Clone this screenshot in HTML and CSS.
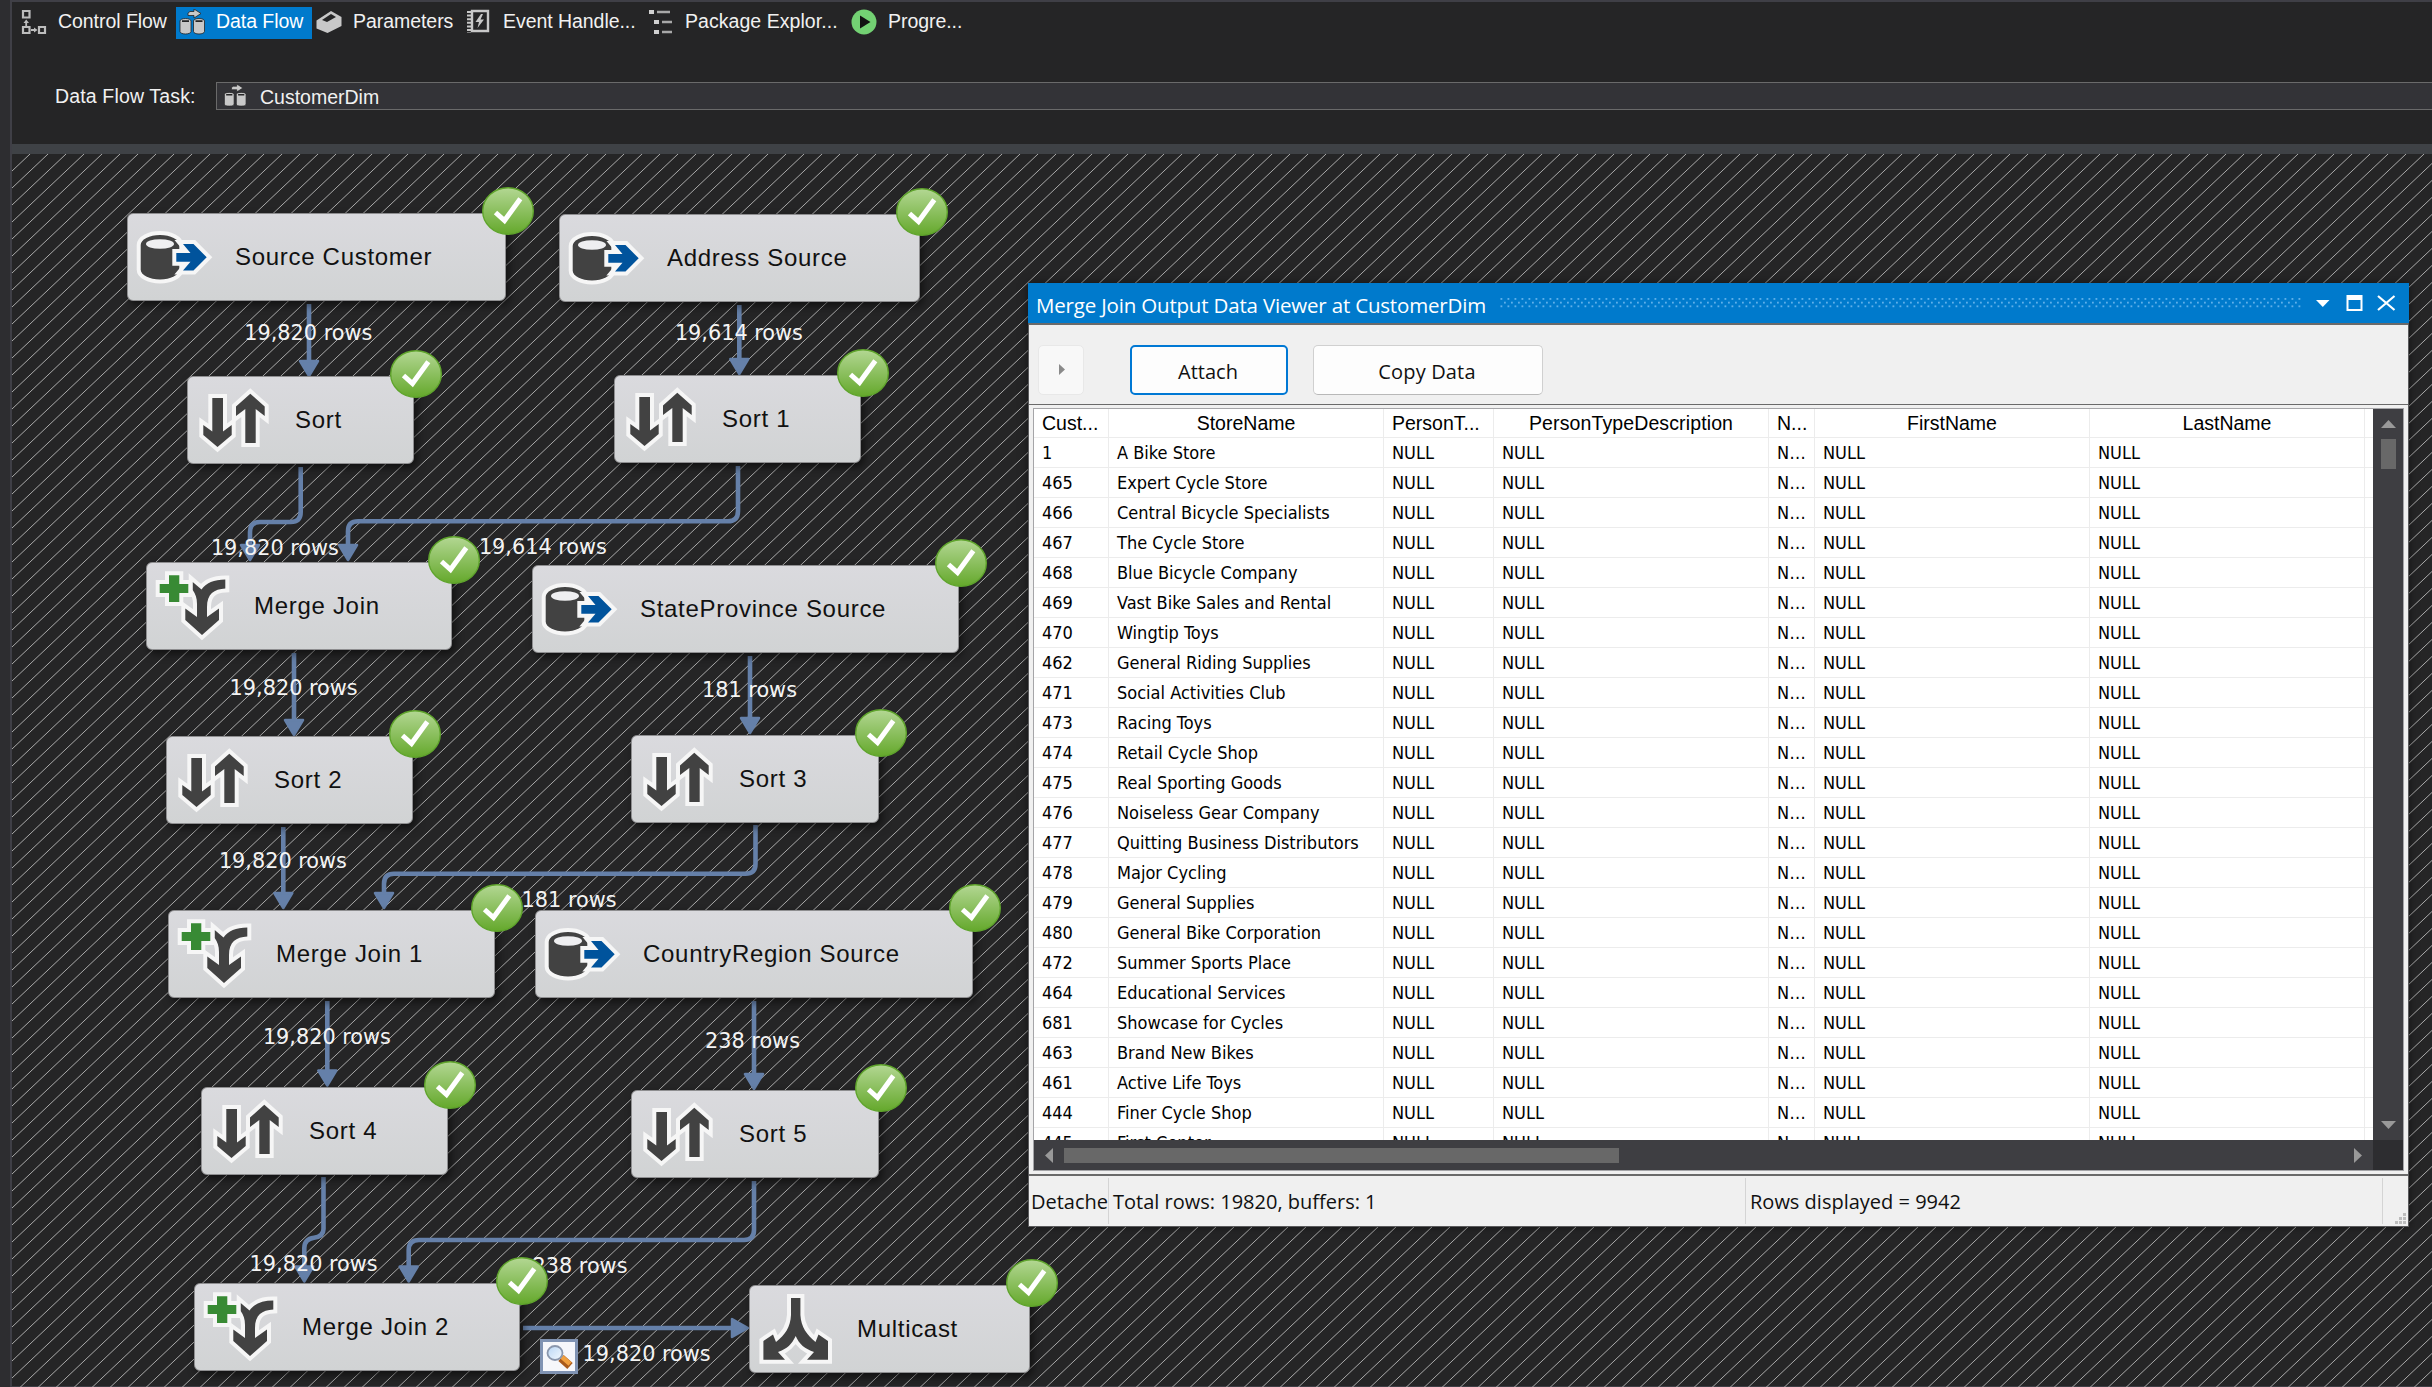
FILE: index.html
```html
<!DOCTYPE html>
<html lang="en">
<head>
<meta charset="utf-8">
<title>CustomerDim - Data Flow</title>
<link rel="stylesheet" href="styles.css">
</head>
<body>
<svg class="defs" width="0" height="0" aria-hidden="true">
  <defs>
    <linearGradient id="green" x1="0" y1="0" x2="0" y2="1"><stop offset="0" stop-color="#b3d793"/><stop offset="1" stop-color="#64a82b"/></linearGradient>
    <linearGradient id="lens" x1="0" y1="0" x2="1" y2="1"><stop offset="0" stop-color="#b9d6f5"/><stop offset="1" stop-color="#f4faff"/></linearGradient>
    <symbol id="ok" viewBox="0 0 52 48"><ellipse cx="26" cy="24" rx="25.3" ry="23.3" fill="url(#green)" stroke="#5fa42c" stroke-width="1.4"/><path d="M13.5 25.5 22.5 33.5 38.3 11.8" fill="none" stroke="#fff" stroke-width="5"/></symbol>
    <symbol id="source" viewBox="0 0 100 88">
      <path class="halo" d="M13.7 32A19.3 10 0 0 1 52.3 32V56.500A19.300 10 0 0 1 13.700 56.500Z"/>
      <ellipse cx="33" cy="31" rx="14" ry="4.800" fill="#efeff1"/>
      <path class="halo blue" d="M49.300 40H63.500L56 31H66.500L79.700 44.300 66.500 57.500H56L63.500 48.700H49.300Z"/>
    </symbol>
    <symbol id="sort" viewBox="0 0 100 88">
      <path class="halo" d="M25.300 22H36V55.500L44.700 49V59L30.500 71 16.300 59V49L25.300 55.500Z"/>
      <path class="halo" d="M58.300 67V33L49 40V30.500L63.300 17.700 77.700 30.500V40L68.700 33V67Z"/>
    </symbol>
    <symbol id="merge" viewBox="0 0 100 88">
      <path class="halo" d="M46.700 20 55.500 27.500C60 21 68 17.500 79.300 17.500V26.500C68 27 61 32 61 45V55L73 46.500V58L56 73 39.300 58V46.500L51 55V42C51 36 49.500 32 46.700 28Z"/>
      <path class="halo green" d="M23 13.300H33.300V22H42.300V31H33.300V40H23V31H13.700V22H23Z"/>
    </symbol>
    <symbol id="multicast" viewBox="0 0 100 88">
      <path class="halo" d="M42 13H51.400V30C52 42 58 50 66.500 57L69.500 49.500 79 56V74.700H58L65 67C56 64 50 59 46.700 51C43 59 38 64 29 67L36 74.700H14.400V56L24 49.500 27 57C36 50 41.500 42 42 30Z"/>
    </symbol>
    <symbol id="flow" viewBox="0 0 26 26">
      <path d="M11 2.500H15V0L22 4.500 15 9V6.500H9V4Z" fill="#c8c8c8" stroke="#252526" stroke-width=".8"/>
      <path d="M1 12A5.500 2.500 0 0 1 12 12V22.500A5.500 2.500 0 0 1 1 22.500ZM14.500 12A5.500 2.500 0 0 1 25.500 12V22.500A5.500 2.500 0 0 1 14.500 22.500Z" fill="#c8c8c8" stroke="#252526" stroke-width=".8"/>
      <path d="M3 12.200H10M16.500 12.200H23.500" stroke="#252526" stroke-width="1.800"/>
    </symbol>
  </defs>
</svg>

<div class="designer">
  <nav class="tabs">
    <a class="tab"><svg viewBox="0 0 26 26"><g fill="none" stroke="#bdbdbd" stroke-width="2.200"><path d="M2 2H8.500V8.500H2ZM2 18H8.500V24H2ZM18 18H24V24H18Z"/><path d="M5.200 17V13M10 21H15" stroke-width="1.800"/></g><path d="M5.200 10.500 8 14H2.500ZM16.500 21 13 18.500V23.500Z" fill="#bdbdbd"/></svg>Control Flow</a>
    <a class="tab active"><svg viewBox="0 0 26 26"><use href="#flow"/></svg>Data Flow</a>
    <a class="tab"><svg viewBox="0 0 26 26"><path d="M.5 11.500 15 2 25.500 8V17L11.500 24 .5 19.500Z" fill="#c8c8c8"/><path d="M6 11 15 5 20 8 11 13Z" fill="#252526"/></svg>Parameters</a>
    <a class="tab"><svg viewBox="0 0 26 26"><path d="M6 2H22V22H6Z" fill="none" stroke="#c8c8c8" stroke-width="2.400"/><path d="M3 2V24" stroke="#c8c8c8" stroke-width="4" stroke-dasharray="2 1.600"/><path d="M15 5 9.500 13H13L11.500 19 18 10.500H14.500L17 5Z" fill="#c8c8c8"/></svg>Event Handle...</a>
    <a class="tab"><svg viewBox="0 0 26 26"><path d="M1 3H6M6 13H11M6 23H11" stroke="#d0d0d0" stroke-width="4"/><path d="M9 3H22M14 13H24M14 23H24" stroke="#a8a8a8" stroke-width="2.500"/></svg>Package Explor...</a>
    <a class="tab"><svg viewBox="0 0 26 26"><circle cx="13" cy="13" r="12.500" fill="#73d173"/><path d="M9 6.500 19.500 13 9 19.500Z" fill="#111"/></svg>Progre...</a>
  </nav>
  <div class="task">
    <span class="task-label">Data Flow Task:</span>
    <div class="combo"><svg viewBox="0 0 26 26"><use href="#flow"/></svg><span>CustomerDim</span></div>
  </div>

  <main class="canvas">
    <svg class="edges" viewBox="12 154 2420 1233">
      <defs>
        <pattern id="hatch" patternUnits="userSpaceOnUse" x="12" y="154" width="18" height="17"><path d="M-1 17.944 19 -.944M-1 .944 1 -.944M17 17.944 19 16.056" stroke="#a8a8a8" stroke-width="1"/></pattern>
      </defs>
      <rect x="12" y="154" width="2420" height="1233" fill="url(#hatch)"/>
      <g class="wire">
        <path d="M309 304V362"/><path d="M739.300 305V360"/>
        <path d="M300.700 467V512Q300.700 522 290.700 522H260Q250 522 250 532V546"/>
        <path d="M738 466V511Q738 521.300 728 521.300H358Q348 521.300 348 531.300V546"/>
        <path d="M294 653V721"/><path d="M283.300 827V893"/><path d="M750 656V719"/>
        <path d="M755.500 825V864Q755.500 873.700 745.500 873.700H394Q384 873.700 384 883.700V893"/>
        <path d="M327.300 1001V1071"/>
        <path d="M323.500 1177V1229Q323.500 1236.500 314 1237.700Q304.300 1239 304.300 1248V1267"/>
        <path d="M754 1001V1074"/>
        <path d="M754 1181V1230Q754 1240 744 1240H419Q408.700 1240 408.700 1250V1267"/>
        <path d="M523 1328H733"/>
      </g>
      <g class="tip">
        <path d="M300 361H318L309 376Z"/><path d="M730.300 359H748.300L739.300 374Z"/>
        <path d="M241 545H259L250 560Z"/><path d="M339 545H357L348 560Z"/>
        <path d="M285 720H303L294 735Z"/><path d="M274.300 893H292.300L283.300 908Z"/>
        <path d="M741 718H759L750 733Z"/><path d="M375 893H393L384 908Z"/>
        <path d="M318.300 1070.500H336.300L327.300 1085.500Z"/><path d="M295.300 1266.500H313.300L304.300 1281.500Z"/>
        <path d="M745 1074H763L754 1089Z"/><path d="M399.700 1266.500H417.700L408.700 1281.500Z"/>
        <path d="M732 1319V1337L748 1328Z"/>
      </g>
      <g class="count">
        <text x="244.300" y="339.500" textLength="128" lengthAdjust="spacingAndGlyphs">19,820 rows</text>
        <text x="674.900" y="339.500" textLength="128" lengthAdjust="spacingAndGlyphs">19,614 rows</text>
        <text x="210.900" y="554.500" textLength="128" lengthAdjust="spacingAndGlyphs">19,820 rows</text>
        <text x="478.900" y="553.500" textLength="128" lengthAdjust="spacingAndGlyphs">19,614 rows</text>
        <text x="229.600" y="694.500" textLength="128" lengthAdjust="spacingAndGlyphs">19,820 rows</text>
        <text x="702" y="696.500" textLength="95" lengthAdjust="spacingAndGlyphs">181 rows</text>
        <text x="218.900" y="867.500" textLength="128" lengthAdjust="spacingAndGlyphs">19,820 rows</text>
        <text x="521.600" y="906.500" textLength="95" lengthAdjust="spacingAndGlyphs">181 rows</text>
        <text x="262.900" y="1043.500" textLength="128" lengthAdjust="spacingAndGlyphs">19,820 rows</text>
        <text x="705" y="1047.500" textLength="95" lengthAdjust="spacingAndGlyphs">238 rows</text>
        <text x="249.600" y="1270.500" textLength="128" lengthAdjust="spacingAndGlyphs">19,820 rows</text>
        <text x="532.500" y="1272.500" textLength="95" lengthAdjust="spacingAndGlyphs">238 rows</text>
        <text x="582.600" y="1360.500" textLength="128" lengthAdjust="spacingAndGlyphs">19,820 rows</text>
      </g>
      <g>
        <rect x="541.500" y="1340.500" width="35" height="32" fill="#f6f7fb" stroke="#8093b3" stroke-width="3"/>
        <path d="M561 1358 570 1366" stroke="#a85a1c" stroke-width="8"/><path d="M562 1357 570 1364" stroke="#f0a040" stroke-width="4.500"/>
        <ellipse cx="555" cy="1353" rx="7.500" ry="7" fill="url(#lens)" stroke="#8a97ad" stroke-width="1.800"/>
      </g>
    </svg>

    <div class="node source-customer"><svg class="glyph"><use href="#source"/></svg><span>Source Customer</span><svg class="badge"><use href="#ok"/></svg></div>
    <div class="node address-source"><svg class="glyph"><use href="#source"/></svg><span>Address Source</span><svg class="badge"><use href="#ok"/></svg></div>
    <div class="node sort-0"><svg class="glyph"><use href="#sort"/></svg><span>Sort</span><svg class="badge"><use href="#ok"/></svg></div>
    <div class="node sort-1"><svg class="glyph"><use href="#sort"/></svg><span>Sort 1</span><svg class="badge"><use href="#ok"/></svg></div>
    <div class="node merge-0"><svg class="glyph"><use href="#merge"/></svg><span>Merge Join</span><svg class="badge"><use href="#ok"/></svg></div>
    <div class="node state-source"><svg class="glyph"><use href="#source"/></svg><span>StateProvince Source</span><svg class="badge"><use href="#ok"/></svg></div>
    <div class="node sort-2"><svg class="glyph"><use href="#sort"/></svg><span>Sort 2</span><svg class="badge"><use href="#ok"/></svg></div>
    <div class="node sort-3"><svg class="glyph"><use href="#sort"/></svg><span>Sort 3</span><svg class="badge"><use href="#ok"/></svg></div>
    <div class="node merge-1"><svg class="glyph"><use href="#merge"/></svg><span>Merge Join 1</span><svg class="badge"><use href="#ok"/></svg></div>
    <div class="node country-source"><svg class="glyph"><use href="#source"/></svg><span>CountryRegion Source</span><svg class="badge"><use href="#ok"/></svg></div>
    <div class="node sort-4"><svg class="glyph"><use href="#sort"/></svg><span>Sort 4</span><svg class="badge"><use href="#ok"/></svg></div>
    <div class="node sort-5"><svg class="glyph"><use href="#sort"/></svg><span>Sort 5</span><svg class="badge"><use href="#ok"/></svg></div>
    <div class="node merge-2"><svg class="glyph"><use href="#merge"/></svg><span>Merge Join 2</span><svg class="badge"><use href="#ok"/></svg></div>
    <div class="node multicast"><svg class="glyph"><use href="#multicast"/></svg><span>Multicast</span><svg class="badge"><use href="#ok"/></svg></div>

    <section class="viewer">
      <header class="titlebar">
        <h1>Merge Join Output Data Viewer at CustomerDim</h1>
        <svg class="grip" height="10"><defs><pattern id="dots" patternUnits="userSpaceOnUse" width="7" height="7.400"><path d="M.5 0H2.300V1.800H.5ZM4 3.700H5.800V5.500H4Z" fill="#5fb0ea"/></pattern></defs><rect width="100%" height="10" fill="url(#dots)"/></svg>
        <svg class="controls" viewBox="0 0 80 16" width="80" height="16" fill="#fff"><path d="M0 5H13.500L6.800 12Z"/><path d="M30.500 0H46.500V16H30.500ZM32.500 5V14H44.500V5Z" fill-rule="evenodd"/><path d="M62 1 78.500 15M78.500 1 62 15" stroke="#fff" stroke-width="2.200"/></svg>
      </header>
      <div class="toolbar">
        <button class="btn play"><svg width="6" height="11"><path d="M0 0 6 5.500 0 11Z" fill="#8a8a8a"/></svg></button>
        <button class="btn attach">Attach</button>
        <button class="btn copy">Copy Data</button>
      </div>
      <div class="frame">
        <div class="grid">
          <div class="rows">
            <div class="row head"><b>Cust...</b><b>StoreName</b><b>PersonT...</b><b>PersonTypeDescription</b><b>N...</b><b>FirstName</b><b>LastName</b><b></b></div>
            <div class="row"><i>1</i><i>A Bike Store</i><i>NULL</i><i>NULL</i><i>N...</i><i>NULL</i><i>NULL</i><i></i></div>
            <div class="row"><i>465</i><i>Expert Cycle Store</i><i>NULL</i><i>NULL</i><i>N...</i><i>NULL</i><i>NULL</i><i></i></div>
            <div class="row"><i>466</i><i>Central Bicycle Specialists</i><i>NULL</i><i>NULL</i><i>N...</i><i>NULL</i><i>NULL</i><i></i></div>
            <div class="row"><i>467</i><i>The Cycle Store</i><i>NULL</i><i>NULL</i><i>N...</i><i>NULL</i><i>NULL</i><i></i></div>
            <div class="row"><i>468</i><i>Blue Bicycle Company</i><i>NULL</i><i>NULL</i><i>N...</i><i>NULL</i><i>NULL</i><i></i></div>
            <div class="row"><i>469</i><i>Vast Bike Sales and Rental</i><i>NULL</i><i>NULL</i><i>N...</i><i>NULL</i><i>NULL</i><i></i></div>
            <div class="row"><i>470</i><i>Wingtip Toys</i><i>NULL</i><i>NULL</i><i>N...</i><i>NULL</i><i>NULL</i><i></i></div>
            <div class="row"><i>462</i><i>General Riding Supplies</i><i>NULL</i><i>NULL</i><i>N...</i><i>NULL</i><i>NULL</i><i></i></div>
            <div class="row"><i>471</i><i>Social Activities Club</i><i>NULL</i><i>NULL</i><i>N...</i><i>NULL</i><i>NULL</i><i></i></div>
            <div class="row"><i>473</i><i>Racing Toys</i><i>NULL</i><i>NULL</i><i>N...</i><i>NULL</i><i>NULL</i><i></i></div>
            <div class="row"><i>474</i><i>Retail Cycle Shop</i><i>NULL</i><i>NULL</i><i>N...</i><i>NULL</i><i>NULL</i><i></i></div>
            <div class="row"><i>475</i><i>Real Sporting Goods</i><i>NULL</i><i>NULL</i><i>N...</i><i>NULL</i><i>NULL</i><i></i></div>
            <div class="row"><i>476</i><i>Noiseless Gear Company</i><i>NULL</i><i>NULL</i><i>N...</i><i>NULL</i><i>NULL</i><i></i></div>
            <div class="row"><i>477</i><i>Quitting Business Distributors</i><i>NULL</i><i>NULL</i><i>N...</i><i>NULL</i><i>NULL</i><i></i></div>
            <div class="row"><i>478</i><i>Major Cycling</i><i>NULL</i><i>NULL</i><i>N...</i><i>NULL</i><i>NULL</i><i></i></div>
            <div class="row"><i>479</i><i>General Supplies</i><i>NULL</i><i>NULL</i><i>N...</i><i>NULL</i><i>NULL</i><i></i></div>
            <div class="row"><i>480</i><i>General Bike Corporation</i><i>NULL</i><i>NULL</i><i>N...</i><i>NULL</i><i>NULL</i><i></i></div>
            <div class="row"><i>472</i><i>Summer Sports Place</i><i>NULL</i><i>NULL</i><i>N...</i><i>NULL</i><i>NULL</i><i></i></div>
            <div class="row"><i>464</i><i>Educational Services</i><i>NULL</i><i>NULL</i><i>N...</i><i>NULL</i><i>NULL</i><i></i></div>
            <div class="row"><i>681</i><i>Showcase for Cycles</i><i>NULL</i><i>NULL</i><i>N...</i><i>NULL</i><i>NULL</i><i></i></div>
            <div class="row"><i>463</i><i>Brand New Bikes</i><i>NULL</i><i>NULL</i><i>N...</i><i>NULL</i><i>NULL</i><i></i></div>
            <div class="row"><i>461</i><i>Active Life Toys</i><i>NULL</i><i>NULL</i><i>N...</i><i>NULL</i><i>NULL</i><i></i></div>
            <div class="row"><i>444</i><i>Finer Cycle Shop</i><i>NULL</i><i>NULL</i><i>N...</i><i>NULL</i><i>NULL</i><i></i></div>
            <div class="row"><i>445</i><i>First Center</i><i>NULL</i><i>NULL</i><i>N...</i><i>NULL</i><i>NULL</i><i></i></div>
          </div>
          <div class="vscroll"><svg width="15" height="8"><path d="M0 8 7.500 0 15 8Z" fill="#999"/></svg><div class="vthumb"></div><svg class="end" width="15" height="8"><path d="M0 0 7.500 8 15 0Z" fill="#999"/></svg></div>
          <div class="hscroll"><svg width="8" height="15"><path d="M8 0 0 7.500 8 15Z" fill="#999"/></svg><div class="hthumb"></div><svg class="end" width="8" height="15"><path d="M0 0 8 7.500 0 15Z" fill="#999"/></svg></div>
          <div class="corner"></div>
        </div>
      </div>
      <footer class="status"><span>Detache</span><span>Total rows: 19820, buffers: 1</span><span>Rows displayed = 9942</span><svg width="26" height="50"><path d="M20 37h3v3h-3zM20 41h3v3h-3zM16 41h3v3h-3zM20 45h3v3h-3zM16 45h3v3h-3zM12 45h3v3h-3z" fill="#bdbdbd"/></svg></footer>
    </section>
  </main>
</div>
</body>
</html>
```

FILE: styles.css
```css
* { box-sizing: border-box; }
body { margin: 0; background: #2d2d30; font-family: "Liberation Sans", sans-serif; overflow: hidden; }
.defs { position: absolute; }
.designer {
  display: flex; flex-direction: column;
  width: 2422px; height: 1387px; margin-left: 10px;
  border-left: 2px solid #3f3f46; border-top: 2px solid #3f3f46; border-bottom: 1px solid #3f3f46;
  background: #252526; color: #f1f1f1; font-size: 19.5px;
}

/* Designer tabs */
.tabs { display: grid; grid-template-columns: 159px 136px 150px 182px 203px auto; height: 42px; padding: 5px 0 0 5px; }
.tab { display: flex; align-items: center; height: 32px; padding: 0 0 3px 3px; letter-spacing: -.05px; white-space: nowrap; }
.tab svg { width: 26px; height: 26px; margin-right: 11px; flex: none; }
.tab.active { background: #007acc; color: #fff; }
.tab:not(.active) { padding-left: 4px; }
.tab:nth-child(5) { letter-spacing: .05px; }

.task { display: flex; height: 110px; padding-top: 38px; border-bottom: 10px solid #3f4246; }
.task-label { width: 204px; padding: 3px 0 0 43px; letter-spacing: .15px; }
.combo { display: flex; flex: 1; height: 28px; padding-left: 5px; border: 1px solid #6a6a6a; border-right: 0; background: #333337; }
.combo svg { width: 26px; height: 23px; margin: 1px 12px 0 0; }
.combo span { padding-top: 3px; }

/* Design surface */
.canvas { position: relative; flex: 1; min-height: 0; }
.edges { display: block; width: 2420px; height: 1233px; position: absolute; left: 0; top: 0; }
.wire { fill: none; stroke: #6580a9; stroke-width: 4.6; }
.tip { fill: #6580a9; stroke: #6580a9; stroke-width: 2.5; stroke-linejoin: round; }
.count { fill: #f4f4f4; font: 22px "DejaVu Sans Condensed", "DejaVu Sans", sans-serif; font-stretch: condensed; }

.node {
  position: absolute; display: flex; align-items: center; height: 88px;
  border: 1px solid #8e8e90; border-radius: 6px;
  background: linear-gradient(#dadade, #d1d3d4);
  box-shadow: 3px 4px 9px rgba(0, 0, 0, .55);
  color: #111; font-size: 24px; letter-spacing: .7px; white-space: nowrap;
}
.glyph { width: 100px; height: 88px; margin: -1px 8px 0 -1px; flex: none; }
.badge { position: absolute; right: -29px; top: -27px; width: 52px; height: 48px; }
.halo { fill: #424242; stroke: #f6f6f6; stroke-width: 8; paint-order: stroke; }
.halo.blue { fill: #00539c; }
.halo.green { fill: #388a34; }

.source-customer { left: 115px; top: 59px; width: 379px; }
.address-source { left: 547px; top: 60px; width: 361px; }
.sort-0 { left: 175px; top: 222px; width: 227px; }
.sort-1 { left: 602px; top: 221px; width: 247px; }
.merge-0 { left: 134px; top: 408px; width: 306px; }
.state-source { left: 520px; top: 411px; width: 427px; }
.sort-2 { left: 154px; top: 582px; width: 247px; }
.sort-3 { left: 619px; top: 581px; width: 248px; }
.merge-1 { left: 156px; top: 756px; width: 327px; }
.country-source { left: 523px; top: 756px; width: 438px; }
.sort-4 { left: 189px; top: 933px; width: 247px; }
.sort-5 { left: 619px; top: 936px; width: 248px; }
.merge-2 { left: 182px; top: 1129px; width: 326px; }
.multicast { left: 737px; top: 1131px; width: 281px; }

/* Data viewer window */
.viewer {
  position: absolute; left: 1016px; top: 129px; width: 1381px; height: 944px;
  display: flex; flex-direction: column;
  border: 1px solid #5a5a5c; border-top: 0; background: #f0f0f0; color: #111;
  box-shadow: 0 0 8px rgba(0, 0, 0, .5);
  font: 20px "Open Sans", "Noto Sans", sans-serif;
}
.titlebar { display: flex; align-items: center; height: 40px; margin: 0 -1px; padding: 0 13px 0 8px; background: #007acc; color: #fff; flex: none; }
.titlebar h1 { margin: 3px 0 0; width: 464px; font-size: 20.5px; font-weight: 400; letter-spacing: -.18px; white-space: nowrap; }
.grip { width: 801px; }
.controls { margin-left: auto; }
.toolbar { display: flex; height: 81px; padding: 20px 0 0 9px; border-top: 2px solid #6a6a6a; flex: none; }
.btn { height: 50px; padding: 2px 2px 0 0; border: 1px solid #d0d0d0; border-radius: 5px; background: #fdfdfd; color: #111; font: inherit; }
.play { width: 46px; margin-right: 46px; border-color: #e8e8e8; background: #f8f8f8; }
.play svg { display: block; margin: -4px auto 0; position: relative; left: 2px; }
.attach { width: 158px; margin-right: 25px; border: 2px solid #0078d4; }
.copy { width: 230px; border-bottom-color: #b8b8b8; letter-spacing: .15px; }

.frame { height: 772px; padding: 3px 4px; border-top: 1px solid #6a6a6a; border-bottom: 2px solid #6a6a6a; flex: none; }
.grid { display: grid; grid-template: 731px 30px / 1339px 30px; border: 1px solid #a5a5a8; height: 763px; background: #fff; }
.rows { overflow: hidden; }
.row { display: grid; grid-template-columns: 75px 275px 110px 275px 46px 275px 275px 1fr; height: 30px; border-bottom: 1px solid #ececec; font: 18px/29px "DejaVu Sans Condensed", "DejaVu Sans", sans-serif; font-stretch: condensed; color: #000; }
.row > * { padding-left: 8px; border-right: 1px solid #ececec; font-style: normal; font-weight: 400; white-space: nowrap; }
.row > *:last-child { border: 0; }
.row i:nth-child(5) { letter-spacing: .4px; }
.row.head { height: 29px; font: 19.5px/28px "Liberation Sans", sans-serif; }
.row.head b:nth-child(4) { letter-spacing: .12px; }
.row.head b:nth-child(2), .row.head b:nth-child(4), .row.head b:nth-child(6), .row.head b:nth-child(7) { padding: 0; text-align: center; }

.vscroll { display: flex; flex-direction: column; align-items: center; padding: 11px 0; background: #3e3e42; }
.vthumb { width: 15px; height: 30px; margin-top: 11px; background: #686868; }
.hscroll { display: flex; align-items: center; padding: 0 11px; background: #3e3e42; }
.hthumb { width: 555px; height: 15px; margin-left: 11px; background: #686868; }
.vscroll .end { margin-top: auto; }
.hscroll .end { margin-left: auto; }
.corner { background: #2d2d30; }

.status { display: grid; grid-template-columns: 80px 637px 637px 26px; height: 50px; }
.status span { margin: 2px 0; padding: 0 0 0 4px; line-height: 47px; border-right: 1px solid #d4d4d4; overflow: hidden; white-space: nowrap; }
.status span:first-child { padding-left: 2px; }
```
